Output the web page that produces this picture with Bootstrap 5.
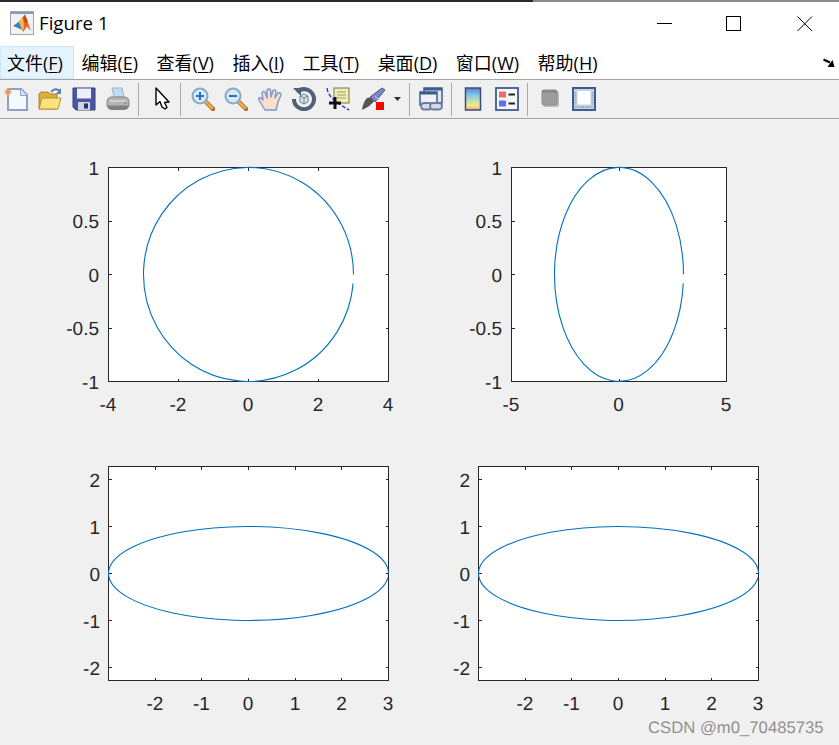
<!DOCTYPE html>
<html lang="zh">
<head>
<meta charset="utf-8">
<title>Figure 1</title>
<link href="https://cdn.jsdelivr.net/npm/bootstrap@5.3.0/dist/css/bootstrap.min.css" rel="stylesheet">
<style>
html,body{margin:0;background:#f0f0f0;overflow:hidden}
.app-win{width:839px;height:745px;display:flex;flex-direction:column;font-family:"Open Sans","Noto Sans CJK SC",sans-serif;color:#000}
.edge-a{width:533px;height:2px;background:#2b2b2f}
.edge-b{flex:1;height:2px;background:#8c8c8c}
.title-bar{height:44px;background:#fff}
.title-bar .logo{margin-left:10px;margin-top:-2px}
.title-txt{font-size:18.700px;margin-left:5px;margin-top:-1px;line-height:1}
.win-ctl{position:absolute;top:16px}
.ctl-a{left:657px}.ctl-b{left:726px}.ctl-c{left:797px}
.menu-bar{height:34px;background:#fff;border-bottom:1px solid #a3a3a3;font-family:"Noto Sans CJK SC",sans-serif;font-size:18px;line-height:32px}
.menu-it{padding:0 11.500px 0 7px;white-space:nowrap;height:33px}
.menu-it.on{background:#e5f3ff;box-shadow:inset 0 0 0 1px #cce8ff}
.mk{font-family:"Open Sans",sans-serif;font-size:18px;text-decoration:underline;text-underline-offset:2px;text-decoration-thickness:1px}
.mp{font-family:"Open Sans",sans-serif;font-size:18px}
.tool-bar{height:39px;background:#f0f0f0;border-bottom:1px solid #a3a3a3;padding-left:4px}
.tool-bar svg{width:24px;height:24px;flex:none;filter:blur(.3px)}
.sep-v{width:1px;height:33px;background:#a9a9a9;flex:none}
.sa{margin:0 12px 0 8px}.sb{margin:0 10px 0 5px}.sc{margin:0 9px 0 6px}.sd{margin:0 9px 0 8px}.se{margin:0 10px 0 8px}
.ib{margin-left:2px}.ic{margin:0 1px}.id{margin-left:10px}
.tool-bar .drop-a{width:10px;margin-left:8px}
.plot-fig{display:block;flex:1;background:#f0f0f0}
.tk{font-family:"Liberation Sans",Arial,sans-serif;font-size:19px;fill:#262626;text-rendering:geometricPrecision}
.yl{text-anchor:end}.xl{text-anchor:middle}
.ax{fill:#fff;stroke:#262626;stroke-width:1;shape-rendering:crispEdges}
.tm{stroke:#262626;stroke-width:1;fill:none;shape-rendering:crispEdges}
.cv{stroke:#0072bd;stroke-width:1.100;fill:none}
.wm{font-family:"Liberation Sans",Arial,sans-serif;font-size:16.700px;fill:#8f8f8f;stroke:#fff;stroke-width:.3px;paint-order:stroke;text-rendering:geometricPrecision}
</style>
</head>
<body>
<div class="app-win position-relative">
  <div class="d-flex"><div class="edge-a"></div><div class="edge-b"></div></div>

  <div class="title-bar d-flex align-items-center">
    <svg class="logo" width="24" height="24" viewBox="0 0 24 24">
      <rect x=".5" y=".5" width="23" height="23" fill="#f2f2f2" stroke="#a5a5a5"/>
      <rect x="1" y="1" width="22" height="2" fill="#7f9fbc"/>
      <path d="M3 15L9 10.500L12 19L8 17Z" fill="#2d86c0"/>
      <path d="M9 10.500L15 3.500L21 20L17 15.500L13 21Z" fill="#e8662a"/>
      <path d="M9 10.500L13 6.500L14 14L13 21Z" fill="#f2b544"/>
      <path d="M13 6.500L15 3.500L18 11L15 12Z" fill="#d2431a"/>
    </svg>
    <span class="title-txt">Figure 1</span>
  </div>
  <svg class="win-ctl ctl-a" width="16" height="15" viewBox="0 0 16 15"><path d="M0 7.500H15" stroke="#000"/></svg>
  <svg class="win-ctl ctl-b" width="16" height="15" viewBox="0 0 16 15"><rect x=".5" y=".5" width="14" height="14" fill="none" stroke="#000"/></svg>
  <svg class="win-ctl ctl-c" width="16" height="15" viewBox="0 0 16 15"><path d="M.5 .5L15 15M15 .5L.5 15" stroke="#000" fill="none"/></svg>

  <div class="menu-bar d-flex">
    <div class="menu-it on">文件<span class="mp">(</span><span class="mk">F</span><span class="mp">)</span></div>
    <div class="menu-it">编辑<span class="mp">(</span><span class="mk">E</span><span class="mp">)</span></div>
    <div class="menu-it">查看<span class="mp">(</span><span class="mk">V</span><span class="mp">)</span></div>
    <div class="menu-it">插入<span class="mp">(</span><span class="mk">I</span><span class="mp">)</span></div>
    <div class="menu-it">工具<span class="mp">(</span><span class="mk">T</span><span class="mp">)</span></div>
    <div class="menu-it">桌面<span class="mp">(</span><span class="mk">D</span><span class="mp">)</span></div>
    <div class="menu-it">窗口<span class="mp">(</span><span class="mk">W</span><span class="mp">)</span></div>
    <div class="menu-it">帮助<span class="mp">(</span><span class="mk">H</span><span class="mp">)</span></div>
    <svg class="ms-auto align-self-center me-1" width="12" height="10" viewBox="0 0 12 10"><path d="M.5 1.500L7 4.500" stroke="#000" stroke-width="2"/><path d="M9.500 2L11.500 9H4.500Z" fill="#000"/></svg>
  </div>

  <div class="tool-bar d-flex align-items-center">
    <div class="d-flex gap-2">
      <svg viewBox="0 0 24 24"><path d="M4 2H17L23 8V23H4Z" fill="#f4f9fd" stroke="#8aa2c6" stroke-width="2"/><path d="M16.500 2V8.500H23" fill="#d5e6f4" stroke="#8aa2c6"/><circle cx="4" cy="5" r="2.500" fill="#e8793a"/><path d="M0 5H8M4 1V9M1.500 2.500L6.500 7.500M6.500 2.500L1.500 7.500" stroke="#f0a070"/></svg>
      <svg class="ib" viewBox="0 0 24 24"><path d="M1 22V7L3 5H10L12 7H19V22Z" fill="#dcae3c" stroke="#a88526"/><path d="M1 22L4 11H23L20 22Z" fill="#fbe27c" stroke="#b8922e"/><path d="M13 5Q17 0 22 4" stroke="#5b7fa8" stroke-width="2" fill="none"/><path d="M23 1V7H18Z" fill="#5b7fa8"/></svg>
      <svg class="ib" viewBox="0 0 24 24"><path d="M1 1H23V23H4L1 20Z" fill="#4a55a8" stroke="#39406f"/><rect x="5" y="1.500" width="14" height="10" fill="#eef0f8"/><rect x="6" y="15" width="12" height="8" fill="#cfd3e6"/><rect x="12" y="16.500" width="4" height="5" fill="#2c3158"/></svg>
      <svg class="ib" viewBox="0 0 24 24"><path d="M6 1H16L18 10H8Z" fill="#c0dcf0" stroke="#9ab2c4"/><path d="M1 15Q1 10 6 10H18Q23 10 23 15V19H1Z" fill="#b4b4b4" stroke="#858585"/><path d="M1 19H23Q22 23 18 23H6Q2 23 1 19Z" fill="#808080"/><path d="M4 14H20" stroke="#dcdcdc" stroke-width="1.500"/><circle cx="19.500" cy="16" r="1" fill="#5aa548"/></svg>
    </div>
    <div class="sep-v sa"></div>
    <svg viewBox="0 0 24 24"><path d="M5 1V18L9 14.500L11 20L14 22L16 20.500L13.500 15.500L18 15Z" fill="#fff" stroke="#000" stroke-width="1.400" stroke-linejoin="round"/></svg>
    <div class="sep-v sb"></div>
    <div class="d-flex gap-2">
      <svg viewBox="0 0 24 24"><path d="M14 14L22 22" stroke="#a96f24" stroke-width="4.500" stroke-linecap="round"/><path d="M15 15L21 21" stroke="#f2aa4c" stroke-width="2.500" stroke-linecap="round"/><circle cx="9" cy="9" r="7.500" fill="#d4eaf8" stroke="#88aac6" stroke-width="2"/><path d="M5 9H13M9 5V13" stroke="#2f6fb8" stroke-width="2"/></svg>
      <svg class="ic" viewBox="0 0 24 24"><path d="M14 14L22 22" stroke="#a96f24" stroke-width="4.500" stroke-linecap="round"/><path d="M15 15L21 21" stroke="#f2aa4c" stroke-width="2.500" stroke-linecap="round"/><circle cx="9" cy="9" r="7.500" fill="#d4eaf8" stroke="#88aac6" stroke-width="2"/><path d="M5 9H13" stroke="#2f6fb8" stroke-width="2"/></svg>
      <svg class="ic" viewBox="0 0 24 24"><path d="M7 23L1 13Q0 10 3 11L5 13L4 6Q5 3.500 7 5L9 11L9 3Q11 1 12.500 3L13 10L15 3.500Q17 2 18 4L17 11L20 6Q23 5 23 8L20 15L18 23Z" fill="#fbdfc8" stroke="#7a96d8" stroke-width="1.400" stroke-linejoin="round"/></svg>
      <svg class="ic" viewBox="0 0 24 24"><path d="M5 5A10 10 0 1 1 2 12" fill="none" stroke="#4e6178" stroke-width="4"/><path d="M1 1H9V9Z" fill="#4e6178"/><path d="M8 9L12 7L16 9V15L12 17L8 15Z" fill="#dfe4ea" stroke="#6b7c90"/><path d="M8 9L12 11L16 9M12 11V17" stroke="#6b7c90" fill="none"/></svg>
      <svg class="ic" viewBox="0 0 24 24"><path d="M1 1Q2 8 8 13T23 23" fill="none" stroke="#2020e0" stroke-width="1.300" stroke-dasharray="4 2"/><rect x="8" y="1" width="15" height="15" fill="#f3eeb6" stroke="#77773f"/><path d="M11 5H20M11 8H20M11 11H20" stroke="#9d9d6a"/><path d="M9 10V22M3 16H15" stroke="#111" stroke-width="3"/></svg>
      <svg class="ib" viewBox="0 0 24 24"><path d="M9 10L21 1L24 3L14 15Z" fill="#7c86c8" stroke="#4e5488"/><path d="M14 9L18 13" stroke="#c8cce8"/><path d="M1 23Q2 15 6 11Q10 9 13 14Q10 19 1 23Z" fill="#555"/><rect x="15" y="15" width="8" height="8" fill="#f00"/></svg>
    </div>
    <svg class="drop-a" viewBox="0 0 10 24"><path d="M1 10H8L4.500 14Z" fill="#333"/></svg>
    <div class="sep-v sc"></div>
    <svg viewBox="0 0 24 24"><rect x="5" y="1" width="18" height="15" fill="#dfe6f0" stroke="#3f5b8e" stroke-width="1.500"/><rect x="1" y="5" width="17" height="13" fill="#eef2f8" stroke="#3f5b8e" stroke-width="1.500"/><rect x="1" y="5" width="17" height="2.500" fill="#3f5b8e"/><rect x="5" y="1" width="18" height="2.500" fill="#3f5b8e"/><rect x="2" y="16" width="11" height="6.500" rx="3.200" fill="#d5dbe6" stroke="#6c7d9c" stroke-width="1.800"/><rect x="11" y="16" width="12" height="6.500" rx="3.200" fill="#d5dbe6" stroke="#6c7d9c" stroke-width="1.800"/></svg>
    <div class="sep-v sd"></div>
    <svg viewBox="0 0 24 24"><defs><linearGradient id="cb" x1="0" y1="0" x2="0" y2="1"><stop offset="0" stop-color="#5d7fd6"/><stop offset=".3" stop-color="#7fc3e8"/><stop offset=".55" stop-color="#b4e0bc"/><stop offset=".8" stop-color="#f6e58c"/><stop offset="1" stop-color="#f1a85e"/></linearGradient></defs><rect x="4.500" y="1" width="15" height="22" fill="url(#cb)" stroke="#3c4a80" stroke-width="1.500"/></svg>
    <svg class="id" viewBox="0 0 24 24"><rect x="1" y="1" width="22" height="22" fill="#f4f6fa" stroke="#3f5b8e" stroke-width="1.800"/><rect x="4" y="4.500" width="7" height="6" fill="#ee6a6a"/><rect x="4" y="13.500" width="7" height="6" fill="#6a6aee"/><path d="M13.500 7.500H20M13.500 16.500H20" stroke="#222" stroke-width="1.800"/></svg>
    <div class="sep-v se"></div>
    <svg viewBox="0 0 24 24"><rect x="5" y="4" width="16" height="16" rx="2" fill="#bdbdbd"/><rect x="4" y="3" width="15" height="15" rx="2" fill="#9d9d9d" stroke="#8c8c8c"/><rect x="4" y="3" width="15" height="3" fill="#8a8a8a"/></svg>
    <svg class="id" viewBox="0 0 24 24"><rect x="1" y="1" width="22" height="22" fill="#c7d2e3" stroke="#3f5b8e" stroke-width="2"/><rect x="5.500" y="4" width="13" height="13.500" fill="#fff"/><path d="M3.500 5V18M20.500 5V18M3 20H21" stroke="#9aa8bf" stroke-width="1.800" stroke-dasharray="1.500 1"/></svg>
  </div>

  <svg class="plot-fig" viewBox="0 119 839 626" width="839" height="626">
    <!-- 左上 -->
    <rect class="ax" x="108.500" y="167.500" width="280" height="214"/>
    <path class="tm" d="M178.500 381.500v-3M248.500 381.500v-3M318.500 381.500v-3M178.500 167.500v3M248.500 167.500v3M318.500 167.500v3M108.500 221h3M108.500 274.500h3M108.500 328h3M388.500 221h-3M388.500 274.500h-3M388.500 328h-3"/>
    <path class="cv" d="M353.500 274.500A105 107 0 1 0 353.130 283.400"/>
    <g class="tk yl"><text x="99" y="175">1</text><text x="99" y="228">0.5</text><text x="99" y="282">0</text><text x="99" y="335">-0.5</text><text x="99" y="389">-1</text></g>
    <g class="tk xl"><text x="108" y="411">-4</text><text x="178" y="411">-2</text><text x="248" y="411">0</text><text x="318" y="411">2</text><text x="388" y="411">4</text></g>
    <!-- 右上 -->
    <rect class="ax" x="511.500" y="167.500" width="215" height="214"/>
    <path class="tm" d="M619 381.500v-3M619 167.500v3M511.500 221h3M511.500 274.500h3M511.500 328h3M726.500 221h-3M726.500 274.500h-3M726.500 328h-3"/>
    <path class="cv" d="M683.500 274.500A64.500 107 0 1 0 683.270 283.400"/>
    <g class="tk yl"><text x="502" y="175">1</text><text x="502" y="228">0.5</text><text x="502" y="282">0</text><text x="502" y="335">-0.5</text><text x="502" y="389">-1</text></g>
    <g class="tk xl"><text x="511" y="411">-5</text><text x="618.500" y="411">0</text><text x="726" y="411">5</text></g>
    <!-- 左下 -->
    <rect class="ax" x="108.500" y="466.500" width="280" height="214"/>
    <path class="tm" d="M155 680.500v-3M201.500 680.500v-3M248.500 680.500v-3M295 680.500v-3M341.500 680.500v-3M155 466.500v3M201.500 466.500v3M248.500 466.500v3M295 466.500v3M341.500 466.500v3M108.500 479.500h3M108.500 526.500h3M108.500 573.500h3M108.500 620.500h3M108.500 667.500h3M388.500 479.500h-3M388.500 526.500h-3M388.500 573.500h-3M388.500 620.500h-3M388.500 667.500h-3"/>
    <path class="cv" d="M388.500 573.500A140 47 0 1 0 388 577.400"/>
    <g class="tk yl"><text x="100" y="487">2</text><text x="100" y="534">1</text><text x="100" y="581">0</text><text x="100" y="628">-1</text><text x="100" y="675">-2</text></g>
    <g class="tk xl"><text x="155" y="710">-2</text><text x="201.500" y="710">-1</text><text x="248" y="710">0</text><text x="295" y="710">1</text><text x="341.500" y="710">2</text><text x="388" y="710">3</text></g>
    <!-- 右下 -->
    <rect class="ax" x="478.500" y="466.500" width="280" height="214"/>
    <path class="tm" d="M525 680.500v-3M571.500 680.500v-3M618.500 680.500v-3M665 680.500v-3M711.500 680.500v-3M525 466.500v3M571.500 466.500v3M618.500 466.500v3M665 466.500v3M711.500 466.500v3M478.500 479.500h3M478.500 526.500h3M478.500 573.500h3M478.500 620.500h3M478.500 667.500h3M758.500 479.500h-3M758.500 526.500h-3M758.500 573.500h-3M758.500 620.500h-3M758.500 667.500h-3"/>
    <path class="cv" d="M758.500 573.500A140 47 0 1 0 758 577.400"/>
    <g class="tk yl"><text x="470" y="487">2</text><text x="470" y="534">1</text><text x="470" y="581">0</text><text x="470" y="628">-1</text><text x="470" y="675">-2</text></g>
    <g class="tk xl"><text x="525" y="710">-2</text><text x="571.500" y="710">-1</text><text x="618" y="710">0</text><text x="665" y="710">1</text><text x="711.500" y="710">2</text><text x="758" y="710">3</text></g>
    <text class="wm" x="648" y="733">CSDN @m0_70485735</text>
  </svg>
</div>
</body>
</html>
